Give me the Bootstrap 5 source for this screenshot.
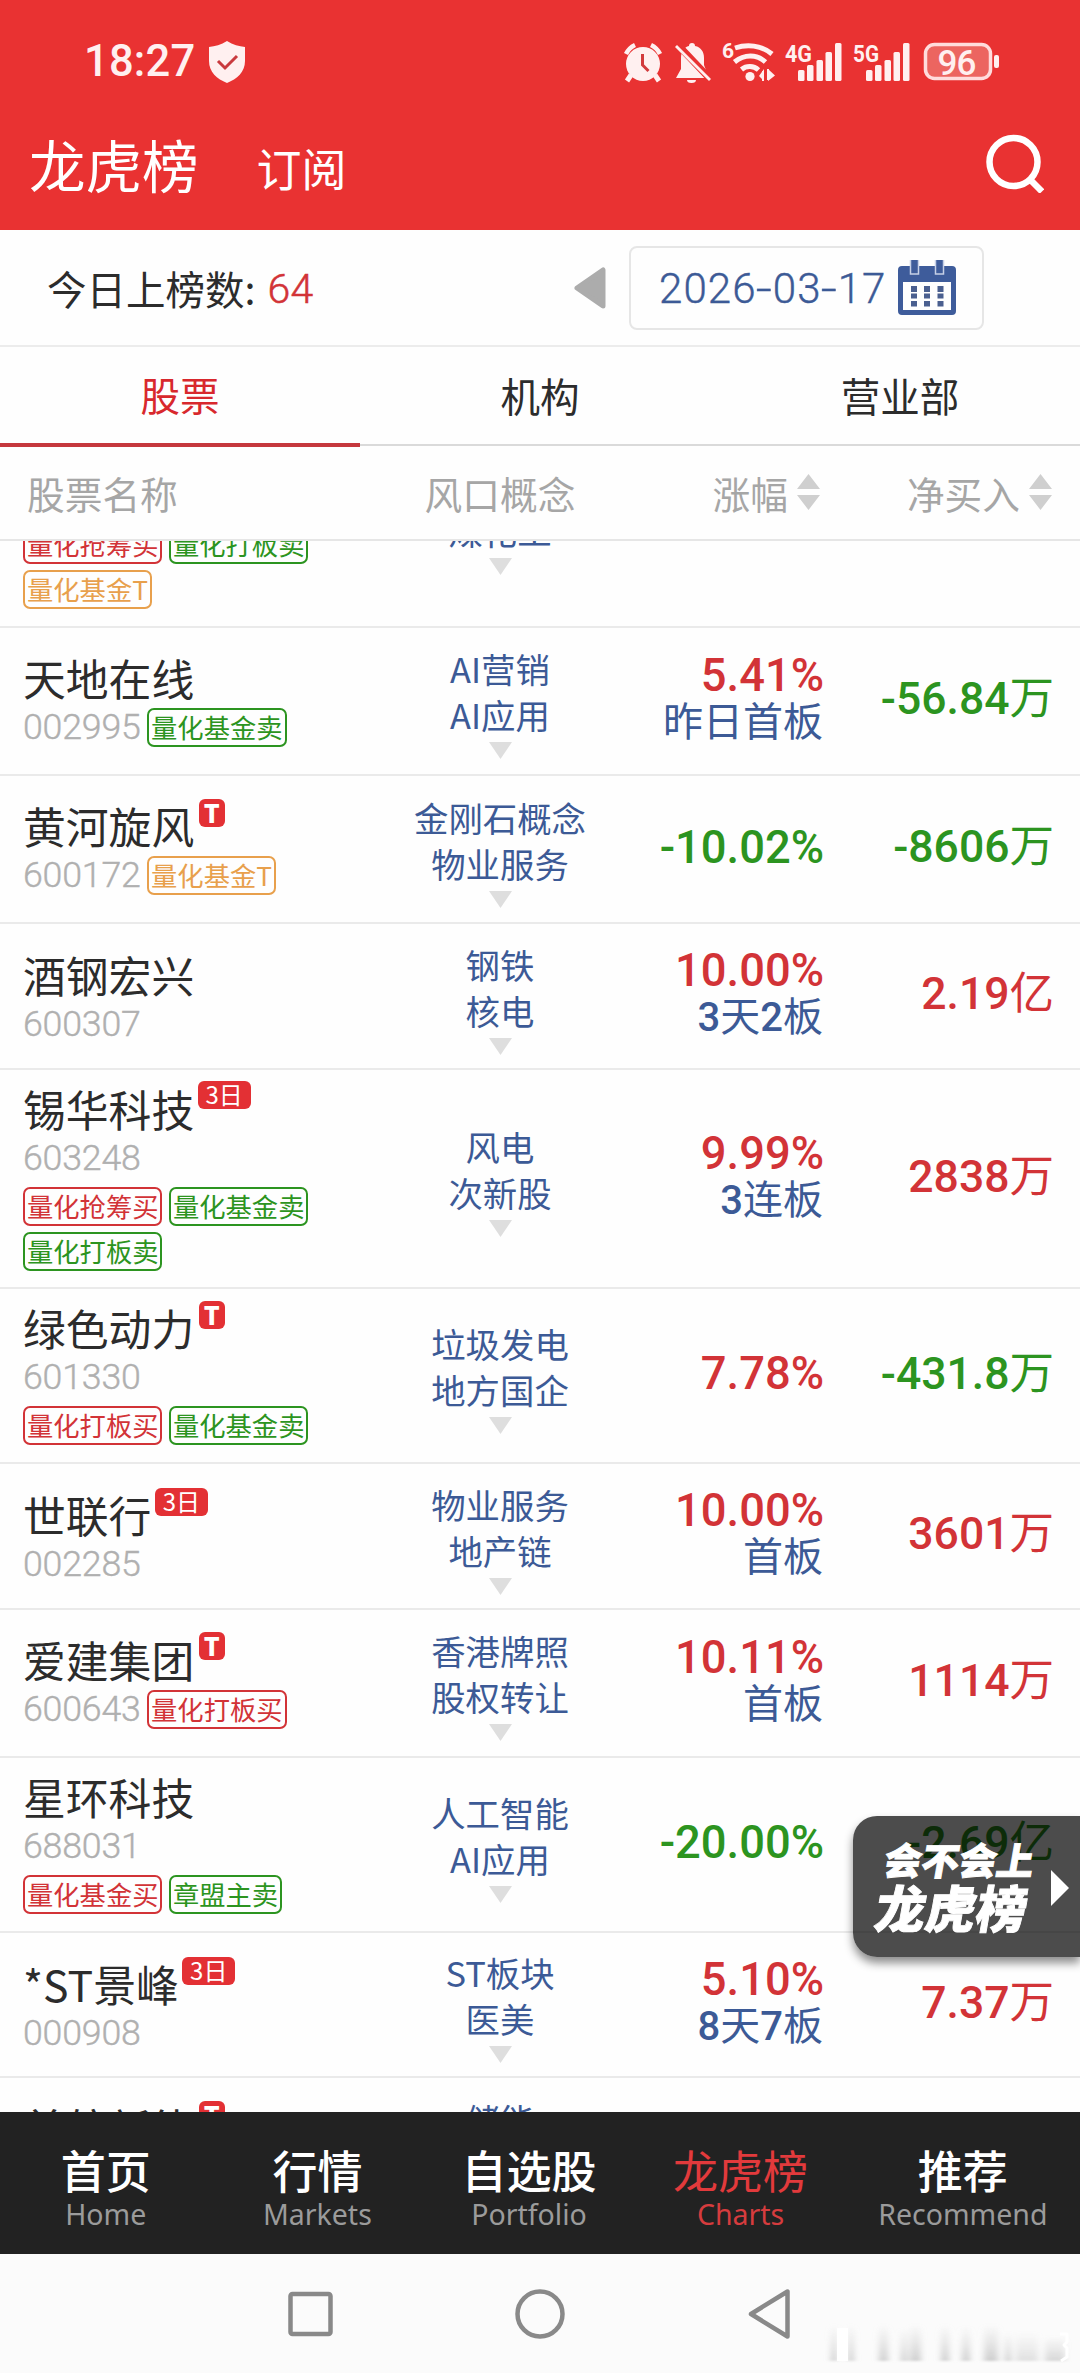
<!DOCTYPE html>
<html lang="zh-CN">
<head>
<meta charset="utf-8">
<meta name="viewport" content="width=device-width, initial-scale=1">
<title>龙虎榜</title>
<link href="https://cdn.jsdelivr.net/npm/bootstrap@5.3.0/dist/css/bootstrap.min.css" rel="stylesheet">
<style>
body{width:1080px;height:2373px;overflow:hidden;background:#fefefe;font-family:"Noto Sans CJK SC",sans-serif;color:#2c2c2c;line-height:1}
svg{display:block;flex:none}
.num-face{font-family:Roboto,"Noto Sans CJK SC",sans-serif}
.c-red{color:#d23337}.c-green{color:#2c9420}.c-blue{color:#3c5a96}.c-orange{color:#e8a04c}
.top-area{background:#e93232;height:230px;color:#fff;flex:none}
.status-line{height:123px;padding-left:84px}
.clock{font:500 43.5px/44px Roboto,sans-serif;letter-spacing:.2px;width:125px;color:#fff0f0}
.status-icons{margin-left:377px}
.title-line{height:107px;padding:0 36px 27px 29px}
.t-main{font-size:56.5px;line-height:80px}
.t-sub{font-size:45px;line-height:80px;margin-left:58px;padding-top:9px}
.tool-line{height:117px;padding-left:47px;border-bottom:2px solid #ececec;font-size:39.5px;flex:none}
.count-box{width:527px}
.count-num{font-size:41px;font-weight:300;letter-spacing:.3px;-webkit-text-stroke:.5px;margin-left:12px;padding-top:3px}
.date-box{width:355px;height:84px;border:2px solid #e6e6e6;border-radius:8px;margin-left:23px;padding-left:28px}
.date-txt{font:300 42px/44px Roboto,sans-serif;letter-spacing:1.1px;width:239px;padding-top:2px;-webkit-text-stroke:.4px}
.date-txt i{font-style:normal;display:inline-block;transform:scaleX(1.35);margin:0 1.5px}
.tab-line{height:99px;flex:none;border-bottom:2px solid #dadada;font-size:39.5px}
.tab-line>div{height:100px;padding-bottom:5px}
.tab-line .on{color:#d8282d;border-bottom:4px solid #c5383d;padding-bottom:2px}
.head-line{height:95px;flex:none;border-bottom:2px solid #e6e6e6;font-size:37.7px;color:#a6a6a6}
.h-name{width:380px;padding-left:27px}.h-idea{width:240px}.h-rise{width:200px}.h-net{width:232px}
.head-line svg{margin-left:9px;fill:#cfcfcf}
.list-area{height:1571px;overflow:hidden;flex:none}
.stock{border-bottom:2px solid #eaeaea;height:148.3px}
.stock.s-low{height:145.3px}.stock.s-mid{height:175px}.stock.s-high{height:219.8px}
.stock.s-cut{height:219.8px;margin-top:-133px}
.col-name{width:380px;padding:26px 0 0 23px}
.s-low .col-name{padding-top:27px}
.s-mid .col-name,.s-high .col-name{padding-top:15px}
.s-cut .col-name{padding-top:112px}
.col-idea{width:240px}
.col-rise{width:203px}
.col-net{width:231px}
.nm{height:50px;font-size:42.8px;line-height:47px;white-space:nowrap}
.flagbox{background:#e33034;color:#fff;border-radius:6px;height:28px;min-width:26px;font-size:24px;line-height:26px;text-align:center;margin:-3.5px 0 0 4.500px}
.flagbox.wide{width:53px;margin-left:3.500px}
.flagbox.tee{font-weight:900;font-size:25px}
.code{font:300 35.7px/47px Roboto,sans-serif;letter-spacing:-.2px;color:#b0b0b0;margin-right:6.500px;-webkit-text-stroke:.4px}
.tags{margin-top:5px;gap:6px 6.500px;flex-wrap:wrap}
.pill{border:2px solid;border-radius:7px;height:39px;line-height:33px;font-size:26.3px;padding:0 2px;white-space:nowrap}
.idea{font-size:34.4px;line-height:46px;padding-top:3px}
.tri-down{margin-top:5px;fill:#dedede}
.pct{font-size:45.3px;line-height:46px;font-weight:500;margin:-3px -1px 0 0}
.why{font-size:40px;line-height:47px}
.why b{font-weight:500}
.net{font-size:44.5px;line-height:50px;margin-bottom:4px}
.net b{font-weight:500}
.promo{position:absolute;left:853px;top:1816px;width:227px;height:141px;border-radius:24px 0 0 24px;background:rgba(0,0,0,.7);box-shadow:0 6px 10px rgba(0,0,0,.45);color:#fff;padding:0 0 2px 27px}
.promo .slant{transform:skewX(-10deg);font-weight:900;white-space:nowrap;-webkit-text-stroke:.9px #fff}
.p1{font-size:37.5px;line-height:40px}.p2{font-size:50.5px;line-height:54px}
.promo svg{margin:4px 11px 0 auto}
.bottom-bar{height:142px;background:#222;flex:none;color:#fff;font-size:45px;font-weight:500;padding-top:9px}
.bottom-bar .item{width:211.6px}
.bottom-bar .item:last-child{width:233px}
.bottom-bar span{line-height:52px}
.bottom-bar small{font:400 28.5px/36px "Noto Sans",sans-serif;color:#9b9b9b}
.bottom-bar .on{color:#e23a3c;font-weight:400}.bottom-bar .on small{color:#d63c3e}
.sys-bar{height:119px;background:#fbfbfb;flex:none}
</style>
</head>
<body class="d-flex flex-column position-relative">
<header class="top-area">
  <div class="status-line d-flex align-items-center">
    <div class="clock">18:27</div>
    <svg width="36" height="42" viewBox="0 0 36 42"><path d="M18 0C24 4 30 5 36 6V20C36 31 28 38 18 42C8 38 0 31 0 20V6C6 5 12 4 18 0Z" fill="#fff0f0"/><path d="M9 20l7 7 12-12" fill="none" stroke="#c93a3e" stroke-width="3"/></svg>
    <svg class="status-icons" width="380" height="44" viewBox="622 39 380 44" fill="#fff0f0">
      <circle cx="643" cy="63" r="17"/><path d="M626 53a19 19 0 0 1 9-9M651 44a19 19 0 0 1 9 9" fill="none" stroke="#fff0f0" stroke-width="4.500"/><path d="M631 74l-4 6M655 74l4 6" stroke="#fff0f0" stroke-width="5"/><path d="M642.500 53v11l6 6" fill="none" stroke="#d23b3d" stroke-width="3"/>
      <path d="M692 42a3 3 0 0 1 3 3c6 1 9 6 9 12v7l5 13h-33l5-9v-11c0-6 3-11 8-12a3 3 0 0 1 3-3Z"/><path d="M687 79h9a4.500 3 0 0 1-9 0Z"/><path d="M677 43l35 37" stroke="#e93232" stroke-width="7"/><path d="M676 45l34 34" stroke="#fff0f0" stroke-width="2.800"/>
      <text x="722" y="57" font-family="Roboto" font-weight="700" font-size="21">6</text>
      <g fill="none" stroke="#fff0f0" stroke-width="5"><path d="M735 47c12-4 26-3 37 6"/><path d="M734.500 61c10-8 22-8 31 0"/><path d="M741.500 68.500c5-4 12-4 17 .5"/></g><circle cx="750" cy="75.500" r="4.600"/>
      <path d="M764 68v12l-5-5zM768 80V68l7 6.500z"/><path d="M763 70v10M768 68v11" stroke="#fff0f0" stroke-width="2"/>
      <text x="785" y="61" font-family="Roboto" font-weight="700" font-size="24.500" textLength="27" lengthAdjust="spacingAndGlyphs">4G</text>
      <g id="bars"><rect x="798" y="69" width="6.500" height="11" rx="1.500"/><rect x="807" y="64" width="6.500" height="16" rx="1.500"/><rect x="816.500" y="59" width="6.500" height="21" rx="1.500"/><rect x="825.500" y="51" width="6.500" height="29" rx="1.500"/><rect x="835" y="42" width="6.500" height="38" rx="1.500"/></g>
      <text x="853" y="61" font-family="Roboto" font-weight="700" font-size="24.500" textLength="26" lengthAdjust="spacingAndGlyphs">5G</text>
      <use href="#bars" x="68"/>
      <rect x="925.500" y="43.500" width="65" height="34" rx="9" fill="#ec6560" stroke="#ffdcdc" stroke-width="3.500"/><rect x="994" y="54" width="5" height="13" rx="2"/>
      <text x="937.500" y="73.500" font-family="Roboto" font-weight="500" font-size="35" textLength="39">96</text>
    </svg>
  </div>
  <div class="title-line d-flex align-items-center">
    <div class="t-main">龙虎榜</div><div class="t-sub">订阅</div>
    <svg class="ms-auto" width="60" height="60" viewBox="983 134 60 60" fill="none" stroke="#fff" stroke-width="6.500"><circle cx="1012.500" cy="163" r="24"/><path d="M1029 180.500l12 12"/></svg>
  </div>
</header>
<section class="tool-line d-flex align-items-center">
  <div class="count-box d-flex align-items-center">今日上榜数:<span class="count-num num-face c-red">64</span></div>
  <svg width="32" height="42" viewBox="0 0 32 42"><path d="M3 21L29 3V39Z" fill="#acacac" stroke="#acacac" stroke-width="5" stroke-linejoin="round"/></svg>
  <div class="date-box d-flex align-items-center c-blue">
    <div class="date-txt">2026<i>-</i>03<i>-</i>17</div>
    <svg width="58" height="55" viewBox="0 0 58 55"><path d="M4 6h50a4 4 0 0 1 4 4v41a4 4 0 0 1-4 4H4a4 4 0 0 1-4-4V10a4 4 0 0 1 4-4ZM5 22v28h48V22Z" fill="#3e5c9b" fill-rule="evenodd"/><path d="M12.500-1h8v15h-8zM37.500-1h8v15h-8z" fill="#3e5c9b" stroke="#c6d0e6" stroke-width="1.500"/><path d="M13 26h6v6h-6zM26 26h6v6h-6zM39.500 26h6v6h-6zM13 33.500h6v5h-6zM26 33.500h6v5h-6zM39.500 33.500h6v5h-6zM13 41h6v5.500h-6zM26 41h6v5.500h-6zM39.500 41h6v5.500h-6z" fill="#4a5f8f"/></svg>
  </div>
</section>
<nav class="tab-line d-flex">
  <div class="on d-flex flex-fill w-100 align-items-center justify-content-center">股票</div>
  <div class="d-flex flex-fill w-100 align-items-center justify-content-center">机构</div>
  <div class="d-flex flex-fill w-100 align-items-center justify-content-center">营业部</div>
</nav>
<div class="head-line d-flex align-items-center">
  <div class="h-name">股票名称</div>
  <div class="h-idea text-center">风口概念</div>
  <div class="h-rise d-flex align-items-center justify-content-end">涨幅<svg width="23" height="36"><path d="M0 15L11.500 0L23 15ZM0 21H23L11.500 36Z"/></svg></div>
  <div class="h-net d-flex align-items-center justify-content-end">净买入<svg width="23" height="36"><path d="M0 15L11.500 0L23 15ZM0 21H23L11.500 36Z"/></svg></div>
</div>
<main class="list-area" id="stockList"></main>
<nav class="bottom-bar d-flex">
  <div class="item d-flex flex-column align-items-center justify-content-center"><span>首页</span><small>Home</small></div>
  <div class="item d-flex flex-column align-items-center justify-content-center"><span>行情</span><small>Markets</small></div>
  <div class="item d-flex flex-column align-items-center justify-content-center"><span>自选股</span><small>Portfolio</small></div>
  <div class="item on d-flex flex-column align-items-center justify-content-center"><span>龙虎榜</span><small>Charts</small></div>
  <div class="item d-flex flex-column align-items-center justify-content-center"><span>推荐</span><small>Recommend</small></div>
</nav>
<footer class="sys-bar">
  <svg width="1080" height="119" viewBox="0 2254 1080 119" fill="none" stroke="#898989" stroke-width="4.500" stroke-linejoin="round">
    <defs><filter id="soft" x="-10%" y="-30%" width="120%" height="160%"><feGaussianBlur stdDeviation="3 1"/></filter><linearGradient id="fade" x1="0" y1="0" x2="0" y2="1"><stop offset="0" stop-color="#bbb" stop-opacity="0"/><stop offset="1" stop-color="#b0b0b0" stop-opacity=".6"/></linearGradient></defs>
    <rect x="290.500" y="2294" width="40" height="40" rx="2"/><circle cx="540" cy="2314" r="22.500"/><path d="M751 2314L787.500 2291.500V2336.500Z"/>
    <g fill="url(#fade)" stroke="none" filter="url(#soft)"><rect x="831" y="2324" width="6" height="37"/><rect x="848" y="2324" width="6" height="37"/><rect x="879" y="2324" width="9" height="37"/><rect x="901" y="2328" width="6" height="33"/><rect x="910" y="2324" width="11" height="37"/><rect x="941" y="2324" width="8" height="37"/><rect x="962" y="2326" width="8" height="35"/><rect x="984" y="2324" width="14" height="37"/><rect x="1005" y="2332" width="6" height="29"/><rect x="1016" y="2332" width="22" height="29" opacity=".6"/><rect x="1045" y="2336" width="20" height="25" opacity=".8"/></g>
    <rect x="837" y="2328" width="11" height="33" fill="#fff" stroke="none"/><path d="M1060 2334h7v8l-3 3 3 3v9l-6 4" stroke="#fff" stroke-width="3"/>
  </svg>
</footer>
<aside class="promo d-flex align-items-center">
  <div class="slant"><div class="p1">会不会上</div><div class="p2">龙虎榜</div></div>
  <svg width="18" height="36"><path d="M0 0L18 18L0 36Z" fill="#fff"/></svg>
</aside>
<script src="https://cdn.jsdelivr.net/npm/bootstrap@5.3.0/dist/js/bootstrap.bundle.min.js"></script>
<script>
const R='c-red',G='c-green',O='c-orange';
const rows=[
 {s:'s-cut',n:'',c:'',t:[[R,'量化抢筹买'],[G,'量化打板卖'],[O,'量化基金T']],i:['','煤化工']},
 {s:'',n:'天地在线',c:'002995',q:[G,'量化基金卖'],i:['AI营销','AI应用'],p:[R,'5.41%'],w:'昨日首板',v:[G,'-56.84','万']},
 {s:'',n:'黄河旋风',f:'T',c:'600172',q:[O,'量化基金T'],i:['金刚石概念','物业服务'],p:[G,'-10.02%'],v:[G,'-8606','万']},
 {s:'s-low',n:'酒钢宏兴',c:'600307',i:['钢铁','核电'],p:[R,'10.00%'],w:'3天2板',v:[R,'2.19','亿']},
 {s:'s-high',n:'锡华科技',f:'3日',c:'603248',t:[[R,'量化抢筹买'],[G,'量化基金卖'],[G,'量化打板卖']],i:['风电','次新股'],p:[R,'9.99%'],w:'3连板',v:[R,'2838','万']},
 {s:'s-mid',n:'绿色动力',f:'T',c:'601330',t:[[R,'量化打板买'],[G,'量化基金卖']],i:['垃圾发电','地方国企'],p:[R,'7.78%'],v:[G,'-431.8','万']},
 {s:'s-low',n:'世联行',f:'3日',c:'002285',i:['物业服务','地产链'],p:[R,'10.00%'],w:'首板',v:[R,'3601','万']},
 {s:'',n:'爱建集团',f:'T',c:'600643',q:[R,'量化打板买'],i:['香港牌照','股权转让'],p:[R,'10.11%'],w:'首板',v:[R,'1114','万']},
 {s:'s-mid',n:'星环科技',c:'688031',t:[[R,'量化基金买'],[G,'章盟主卖']],i:['人工智能','AI应用'],p:[G,'-20.00%'],v:[G,'-2.69','亿']},
 {s:'s-low',n:'*ST景峰',f:'3日',c:'000908',i:['ST板块','医美'],p:[R,'5.10%'],w:'8天7板',v:[R,'7.37','万']},
 {s:'',n:'首航新能',f:'T',c:'',i:['储能',''],v:null}
];
const pill=a=>`<span class="pill ${a[0]}">${a[1]}</span>`;
document.getElementById('stockList').innerHTML=rows.map(r=>`<div class="stock d-flex ${r.s}">
<div class="col-name">${r.n?`<div class="nm d-flex align-items-start">${r.n}${r.f?`<span class="flagbox ${r.f=='T'?'tee':'wide'}">${r.f}</span>`:''}</div><div class="d-flex align-items-center"><span class="code">${r.c}</span>${r.q?pill(r.q):''}</div>`:''}
${r.t?`<div class="tags d-flex">${r.t.map(pill).join('')}</div>`:''}</div>
<div class="col-idea d-flex flex-column align-items-center justify-content-center"><div class="idea c-blue text-center">${r.i.map(x=>`<div>${x||'&nbsp;'}</div>`).join('')}</div><svg class="tri-down" width="23" height="17"><path d="M0 0H23L11.500 17Z"/></svg></div>
<div class="col-rise num-face d-flex flex-column align-items-end justify-content-center">${r.p?`<div class="pct ${r.p[0]}">${r.p[1]}</div>`:''}${r.w?`<div class="why c-blue">${r.w.replace(/\d/g,'<b>$&</b>')}</div>`:''}</div>
<div class="col-net num-face d-flex align-items-center justify-content-end">${r.v?`<div class="net ${r.v[0]}"><b>${r.v[1]}</b>${r.v[2]}</div>`:''}</div></div>`).join('');
</script>
</body>
</html>
